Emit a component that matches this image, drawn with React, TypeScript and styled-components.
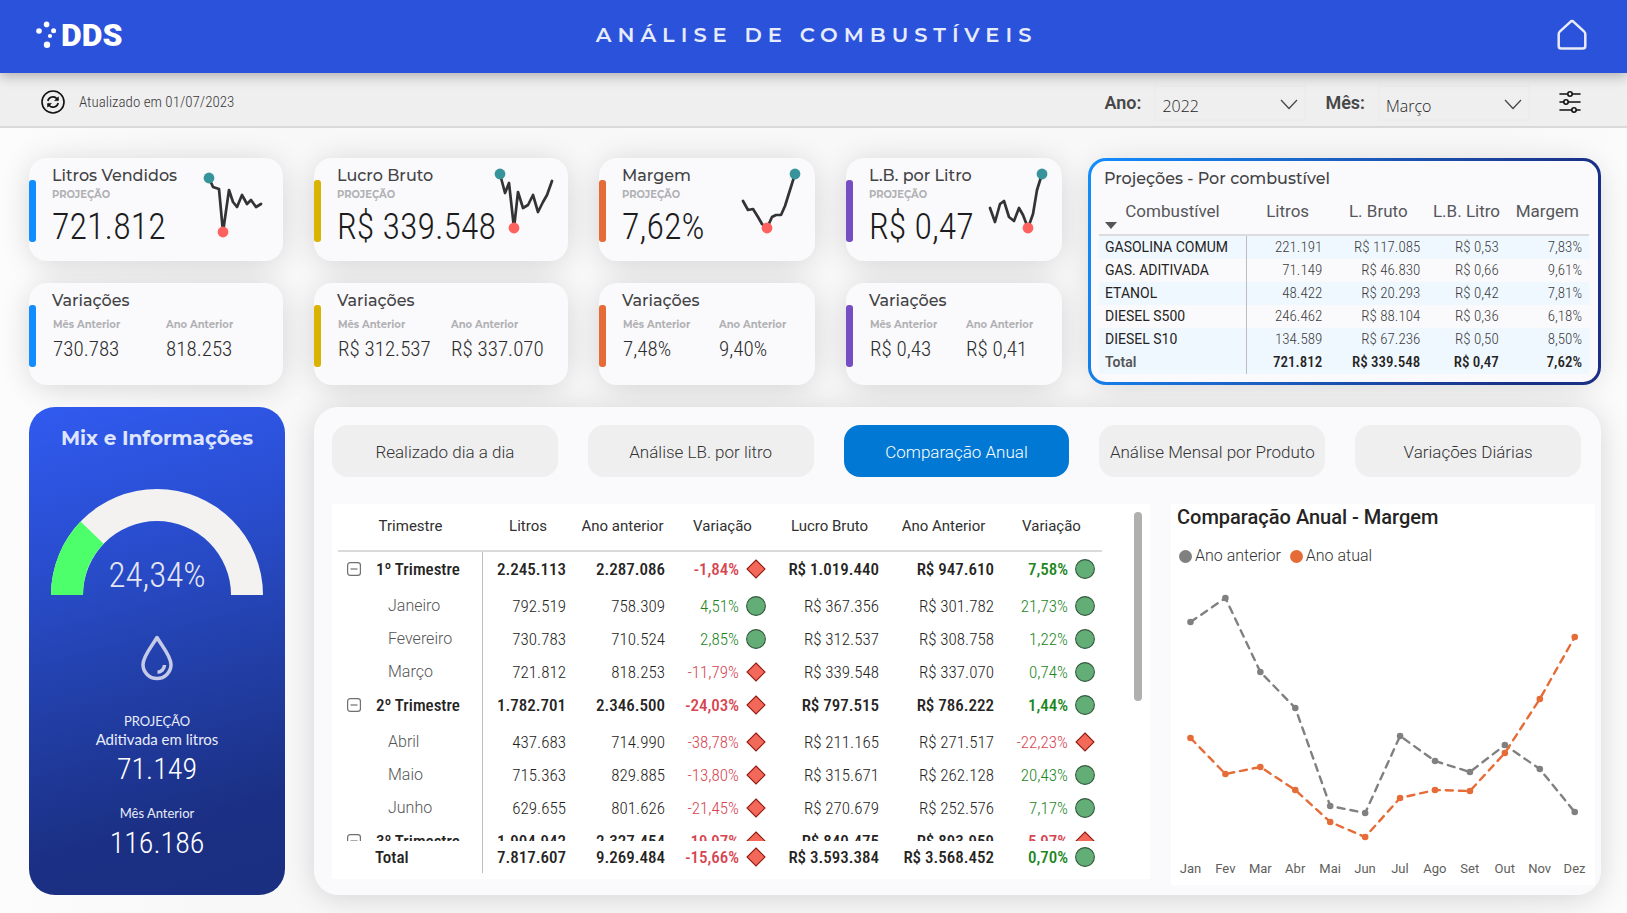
import React from "react";
import styled, { createGlobalStyle } from "styled-components";

const din = '"Roboto Condensed", Roboto, "Liberation Sans", sans-serif';
const dinWide = 'Roboto, "Liberation Sans", sans-serif';
const geo = 'Montserrat, "Open Sans", sans-serif';
const humanist = 'Lato, "Open Sans", sans-serif';

const GlobalStyle = createGlobalStyle`
  *, *::before, *::after { box-sizing: border-box; }
  body { margin: 0; background: #fafafb; color: #252423; font-family: ${din}; }
  h1, h2, h3, p, dl, dd { margin: 0; }
  button, select { font: inherit; color: inherit; }
`;

const Page = styled.div`
  min-height: 100vh;
  isolation: isolate;
  background: linear-gradient(90deg, #fcfcfc, #f8f8f9 12%, #f8f8f9 92%, #fbfbfc);
`;

/* ---------- top bars ---------- */

const Header = styled.header`
  position: relative;
  z-index: 1;
  display: grid;
  grid-template-columns: 1fr auto 1fr;
  align-items: center;
  height: 73px;
  padding: 0 40px 3px 36px;
  background: #2b52da;
  box-shadow: 0 3px 12px rgba(0, 0, 0, 0.28);
`;

const Logo = styled.a`
  display: flex;
  align-items: center;
  gap: 4px;
  color: #fff;
  font: 900 32px/34px ${dinWide};
  text-decoration: none;
`;

const Title = styled.h1`
  padding-left: 10px;
  color: #e6ebfd;
  font: 600 21px/26px ${geo};
  letter-spacing: 6px;
`;

const IconButton = styled.button`
  display: flex;
  justify-self: end;
  padding: 0;
  border: 0;
  background: none;
  cursor: pointer;
`;

const FilterBar = styled.section`
  display: flex;
  align-items: center;
  height: 55px;
  padding: 4px 46px 0 41px;
  border-bottom: 2px solid #d9d9da;
  background: #efeff0;
`;

const Updated = styled.p`
  flex: 1;
  display: flex;
  align-items: center;
  gap: 14px;
  color: #3a3a3a;
  font: 300 15px/20px ${din};
`;

const FilterLabel = styled.label`
  display: flex;
  align-items: center;
  gap: 13px;
  margin-right: 19px;
  padding-top: 3px;
  color: #474747;
  font: 600 18px/34px ${dinWide};
`;

const SelectBox = styled.span`
  position: relative;
  display: flex;
  width: 152px;
  border: 2px solid #ececed;

  svg {
    position: absolute;
    right: 6px;
    top: 12px;
    pointer-events: none;
  }
`;

const Select = styled.select`
  appearance: none;
  width: 100%;
  height: 32px;
  padding: 6px 6px 0;
  border: 0;
  background: transparent;
  color: #252423;
  font: 300 16px/24px "Open Sans", "Noto Sans", sans-serif;
`;

/* ---------- cards ---------- */

const Content = styled.main`
  display: grid;
  gap: 22px;
  padding: 30px 26px 18px 29px;
`;

const TopRow = styled.div`
  display: grid;
  grid-template-columns: minmax(0, 1033fr) minmax(0, 513fr);
  gap: 26px;
`;

const CardGrid = styled.div`
  display: grid;
  grid-template-columns: 254fr 254fr 216fr 216fr;
  grid-template-rows: 103px 102px;
  gap: 22px 31px;
`;

const Raised = styled.div`
  position: relative;

  &::before {
    content: "";
    position: absolute;
    inset: 0;
    z-index: -1;
    border-radius: 24px;
    box-shadow: 0 3px 30px rgba(0, 0, 0, 0.15);
  }
`;

const Card = styled(Raised)`
  display: flex;
  align-items: flex-start;
  border-radius: 18px;
  background: #fafafc;
`;

const Accent = styled.span<{ $color: string }>`
  flex: none;
  width: 7px;
  height: 62px;
  margin: 22px 16px 0 0;
  border-radius: 3px;
  background: ${p => p.$color};
`;

const CardBody = styled.div`
  flex: 1;
  min-width: 0;
  padding-top: 8px;
`;

const CardTitle = styled.h2`
  color: #434345;
  font: 500 16px/20px ${geo};
  white-space: nowrap;
`;

const Caption = styled.p`
  color: #b1b1b4;
  font: 700 10px/18px ${geo};
`;

const BigNumber = styled.p`
  color: #1c1c1c;
  font: 300 36px/46px ${din};
  white-space: nowrap;
`;

const Spark = styled.svg`
  flex: none;
  margin: 0 14px 0 -80px;
`;

const Variations = styled.dl<{ $wide: boolean }>`
  display: grid;
  grid-template-columns: ${p => (p.$wide ? 113 : 96)}px 1fr;
  margin-top: 7px;
  padding-left: 1px;

  dt {
    color: #b1b1b4;
    font: 700 10px/14px ${geo};
    white-space: nowrap;
  }
  dd {
    margin-top: 4px;
    color: #2c2c2c;
    font: 300 21px/26px ${din};
    white-space: nowrap;
  }
`;

/* ---------- fuel projections ---------- */

const Projections = styled(Raised)`
  padding: 8px 9px 6px 8px;
  border: 3px solid transparent;
  border-radius: 18px;
  background:
    linear-gradient(#fafafc, #fafafc) padding-box,
    linear-gradient(110deg, #118dff, #1b62c4 40%, #1a2f86 85%) border-box;
`;

const ProjectionsTitle = styled.h2`
  padding-left: 5px;
  color: #434345;
  font: 500 16px/20px ${geo};
`;

const FuelTable = styled.table`
  width: 100%;
  margin-top: 3px;
  border-collapse: collapse;
  table-layout: fixed;
  font: 300 15px/23px ${din};

  thead th {
    height: 43px;
    padding: 0 0 4px;
    border-bottom: 2px solid #dcdcdc;
    color: #56565a;
    font: 400 17px/20px ${dinWide};
    white-space: nowrap;
  }
  thead th:nth-child(2) { width: 17%; }
  thead th:nth-child(3) { width: 20%; }
  thead th:nth-child(4) { width: 16%; }
  tbody th, tfoot th {
    padding: 0 0 0 6px;
    border-right: 1px solid #bdbdbd;
    font-family: ${dinWide};
    font-size: 14px;
    font-weight: 400;
    text-align: left;
    white-space: nowrap;
  }
  td {
    padding: 0 7px 0 0;
    color: #3c3c3c;
    text-align: right;
    white-space: nowrap;
  }
  tbody tr:nth-child(odd), tfoot tr { background: #f0f8ff; }
  tfoot th { color: #555; font-weight: 600; }
  tfoot td { color: #252423; font-weight: 500; }
`;

const FuelName = styled.th`
  position: relative;
  width: 30%;

  svg {
    position: absolute;
    left: 6px;
    bottom: 5px;
  }
`;

/* ---------- mix panel ---------- */

const BottomRow = styled.div`
  display: grid;
  grid-template-columns: 256px minmax(0, 1fr);
  gap: 29px;
`;

const Mix = styled.aside`
  display: flex;
  flex-direction: column;
  align-items: center;
  border-radius: 26px;
  background: linear-gradient(165deg, #315bf0, #2a4fd4 25%, #2341ac 52%, #1b3084 82%, #1a2f80);
  color: #e9ecfa;
  text-align: center;
`;

const MixTitle = styled.h2`
  margin-top: 18px;
  color: #dfe5fc;
  font: 700 20px/26px ${geo};
`;

const GaugeBox = styled.div`
  display: grid;
  justify-items: center;
  margin: 37px 0 40px;

  > * { grid-area: 1 / 1; }
`;

const GaugeValue = styled.span`
  align-self: end;
  color: #e3e6f2;
  font: 300 35px/38px ${din};
`;

const Drop = styled.svg`
  margin-bottom: 31px;
`;

const MixLabel = styled.p<{ $large?: boolean }>`
  font: 400 ${p => (p.$large ? 15 : 13)}px/18px ${humanist};
`;

const MixValue = styled.p`
  margin: 4px 0 18px;
  color: #fff;
  font: 300 30px/34px ${din};
`;

/* ---------- main panel ---------- */

const Panel = styled(Raised)`
  padding: 18px 6px 10px 18px;
  border-radius: 26px;
  background: #fafafc;
`;

const Tabs = styled.nav`
  display: grid;
  grid-template-columns: repeat(5, 1fr);
  gap: 30px;
  margin: 0 14px 27px 0;
`;

const Tab = styled.button<{ $active: boolean }>`
  height: 52px;
  padding: 2px 0 0;
  border: 0;
  border-radius: 16px;
  background: ${p => (p.$active ? "#0078d4" : "#efeff0")};
  color: ${p => (p.$active ? "#fff" : "#333")};
  font: 300 17px/24px ${dinWide};
  white-space: nowrap;
  cursor: pointer;
`;

const PanelBody = styled.div`
  display: grid;
  grid-template-columns: minmax(0, 818fr) minmax(0, 424fr);
  gap: 21px;
  align-items: start;
`;

const TableBox = styled.div`
  display: flex;
  justify-content: space-between;
  height: 375px;
  padding: 0 8px 0 6px;
  background: #fff;
`;

const ScrollThumb = styled.span`
  width: 8px;
  height: 189px;
  margin-top: 8px;
  border-radius: 4px;
  background: #b0b0ae;
`;

const Matrix = styled.table`
  display: flex;
  flex-direction: column;
  flex: 0 1 764px;
  font: 300 17px/24px ${din};
`;

const MatrixHead = styled.thead`
  display: block;
  border-bottom: 2px solid #dadada;

  th {
    color: #303030;
    font: 400 15px/42px ${dinWide};
    text-align: center;
    white-space: nowrap;
  }
`;

const MatrixBody = styled.tbody`
  display: block;
  height: 289px;
  overflow: hidden;
`;

const MatrixFoot = styled.tfoot`
  display: block;
`;

const MatrixRow = styled.tr<{ $kind?: "group" | "month" | "total" }>`
  display: grid;
  grid-template-columns: 145fr 90fr 99fr 101fr 113fr 115fr 101fr;
  height: ${p => (p.$kind === "group" ? 37 : p.$kind === "month" ? 33 : p.$kind === "total" ? 32 : 46)}px;
  font-weight: ${p => (p.$kind === "month" ? 300 : 500)};
`;

const RowName = styled.th<{ $kind: "group" | "month" | "total" }>`
  display: flex;
  align-items: center;
  gap: 15px;
  padding: 0 0 ${p => (p.$kind === "group" ? 3 : 0)}px ${p => (p.$kind === "group" ? 9 : p.$kind === "month" ? 50 : 37)}px;
  border-right: 1px solid #bdbdbd;
  color: ${p => (p.$kind === "month" ? "#555" : "#252423")};
  font-family: ${p => (p.$kind === "month" ? dinWide : din)};
  font-size: ${p => (p.$kind === "month" ? 16 : 17)}px;
  font-weight: ${p => (p.$kind === "month" ? 300 : 500)};
  white-space: nowrap;
`;

const Cell = styled.td<{ $group: boolean; $tone?: "up" | "down" }>`
  display: flex;
  align-items: center;
  justify-content: flex-end;
  gap: 7px;
  padding: 0 7px ${p => (p.$group ? 3 : 0)}px 0;
  color: ${p => (p.$tone === "up" ? "#1a861c" : p.$tone === "down" ? "#d64550" : "#252423")};
  white-space: nowrap;
`;

const ToggleButton = styled.button`
  display: flex;
  padding: 0;
  border: 0;
  background: none;
`;

const ChartBox = styled.section`
  height: 381px;
  padding: 0 3px 0 2px;
  background: #fff;
`;

const ChartTitle = styled.h2`
  padding-left: 4px;
  color: #252423;
  font: 500 20px/26px ${dinWide};
`;

const Legend = styled.div`
  display: flex;
  gap: 9px;
  padding: 16px 0 0 6px;
  color: #333;
  font: 300 16px/20px ${dinWide};
`;

const LegendItem = styled.span<{ $color: string }>`
  display: flex;
  align-items: center;
  gap: 3px;

  &::before {
    content: "";
    width: 13px;
    height: 13px;
    border-radius: 50%;
    background: ${p => p.$color};
  }
`;

const Plot = styled.svg`
  display: block;
  width: 100%;
  height: 294px;
`;

const Months = styled.div`
  display: grid;
  grid-template-columns: repeat(12, 1fr);
  color: #605e5c;
  font: 400 13px/18px ${dinWide};
  text-align: center;
`;

/* ---------- data ---------- */

type Point = [number, number];

type Metric = {
  title: string;
  value: string;
  color: string;
  wide: boolean;
  month: string;
  year: string;
  line: Point[];
  high: Point;
  low: Point;
};

const metrics: Metric[] = [
  {
    title: "Litros Vendidos", value: "721.812", color: "#118dff", wide: true, month: "730.783", year: "818.253",
    line: [[6, 20], [10, 29], [16, 31], [20, 74], [26, 32], [30, 44], [34, 49], [39, 37], [44, 46], [48, 42], [53, 49], [58, 46]],
    high: [6, 20], low: [20, 74],
  },
  {
    title: "Lucro Bruto", value: "R$ 339.548", color: "#d9b300", wide: true, month: "R$ 312.537", year: "R$ 337.070",
    line: [[12, 16], [17, 35], [21, 25], [26, 70], [30, 34], [35, 50], [40, 47], [45, 37], [50, 54], [55, 44], [59, 37], [64, 23]],
    high: [12, 16], low: [26, 70],
  },
  {
    title: "Margem", value: "7,62%", color: "#e66c37", wide: false, month: "7,48%", year: "9,40%",
    line: [[8, 43], [13, 52], [18, 51], [23, 59], [27, 66], [32, 70], [37, 59], [41, 57], [46, 57], [50, 48], [60, 16]],
    high: [60, 16], low: [32, 70],
  },
  {
    title: "L.B. por Litro", value: "R$ 0,47", color: "#744ec2", wide: false, month: "R$ 0,43", year: "R$ 0,41",
    line: [[8, 50], [13, 64], [18, 46], [22, 43], [27, 59], [32, 63], [37, 50], [41, 57], [46, 70], [51, 56], [55, 32], [60, 16]],
    high: [60, 16], low: [46, 70],
  },
];

const fuels = [
  ["GASOLINA COMUM", "221.191", "R$ 117.085", "R$ 0,53", "7,83%"],
  ["GAS. ADITIVADA", "71.149", "R$ 46.830", "R$ 0,66", "9,61%"],
  ["ETANOL", "48.422", "R$ 20.293", "R$ 0,42", "7,81%"],
  ["DIESEL S500", "246.462", "R$ 88.104", "R$ 0,36", "6,18%"],
  ["DIESEL S10", "134.589", "R$ 67.236", "R$ 0,50", "8,50%"],
];

const tabs = ["Realizado dia a dia", "Análise LB. por litro", "Comparação Anual", "Análise Mensal por Produto", "Variações Diárias"];

type Row = { kind: "group" | "month" | "total"; name: string; cells: string[] };

const rows: Row[] = [
  { kind: "group", name: "1º Trimestre", cells: ["2.245.113", "2.287.086", "-1,84%", "R$ 1.019.440", "R$ 947.610", "7,58%"] },
  { kind: "month", name: "Janeiro", cells: ["792.519", "758.309", "4,51%", "R$ 367.356", "R$ 301.782", "21,73%"] },
  { kind: "month", name: "Fevereiro", cells: ["730.783", "710.524", "2,85%", "R$ 312.537", "R$ 308.758", "1,22%"] },
  { kind: "month", name: "Março", cells: ["721.812", "818.253", "-11,79%", "R$ 339.548", "R$ 337.070", "0,74%"] },
  { kind: "group", name: "2º Trimestre", cells: ["1.782.701", "2.346.500", "-24,03%", "R$ 797.515", "R$ 786.222", "1,44%"] },
  { kind: "month", name: "Abril", cells: ["437.683", "714.990", "-38,78%", "R$ 211.165", "R$ 271.517", "-22,23%"] },
  { kind: "month", name: "Maio", cells: ["715.363", "829.885", "-13,80%", "R$ 315.671", "R$ 262.128", "20,43%"] },
  { kind: "month", name: "Junho", cells: ["629.655", "801.626", "-21,45%", "R$ 270.679", "R$ 252.576", "7,17%"] },
  { kind: "group", name: "3º Trimestre", cells: ["1.904.942", "2.327.454", "-19,97%", "R$ 840.475", "R$ 893.959", "-5,97%"] },
];

const total: Row = {
  kind: "total", name: "Total",
  cells: ["7.817.607", "9.269.484", "-15,66%", "R$ 3.593.384", "R$ 3.568.452", "0,70%"],
};

const months = ["Jan", "Fev", "Mar", "Abr", "Mai", "Jun", "Jul", "Ago", "Set", "Out", "Nov", "Dez"];
const previous = [56, 32, 106, 142, 240, 247, 170, 195, 206, 179, 203, 246];
const current = [172, 208, 201, 224, 256, 271, 232, 224, 225, 187, 133, 71];

/* ---------- parts ---------- */

const Sparkline = ({ line, high, low }: Pick<Metric, "line" | "high" | "low">) => (
  <Spark width="66" height="90" viewBox="0 0 66 90" aria-hidden="true">
    <polyline points={line.join(" ")} fill="none" stroke="#333" strokeWidth="2.7" strokeLinejoin="round" strokeLinecap="round" />
    <circle cx={high[0]} cy={high[1]} r="5.4" fill="#37949a" />
    <circle cx={low[0]} cy={low[1]} r="5.4" fill="#fd625e" />
  </Spark>
);

const Chevron = () => (
  <svg width="18" height="11" viewBox="0 0 18 11" fill="none" stroke="#444" strokeWidth="1.2" aria-hidden="true">
    <path d="M1 1l8 8.5L17 1" />
  </svg>
);

const Mark = ({ tone }: { tone: "up" | "down" }) => (
  <svg width="20" height="20" viewBox="0 0 20 20" aria-hidden="true">
    {tone === "up"
      ? <circle cx="10" cy="10" r="9.4" fill="#62ae76" stroke="#35593f" strokeWidth="1.1" />
      : <path d="M10 1l9 9-9 9-9-9z" fill="#f2695a" stroke="#931a10" strokeWidth="1.1" />}
  </svg>
);

const Minus = () => (
  <svg width="14" height="14" viewBox="0 0 14 14" fill="none" stroke="#707070" strokeWidth="1.2" aria-hidden="true">
    <rect x=".6" y=".6" width="12.8" height="12.8" rx="2.6" />
    <path d="M3.5 7h7" />
  </svg>
);

const DataRow = ({ row }: { row: Row }) => (
  <MatrixRow $kind={row.kind}>
    <RowName $kind={row.kind} scope="row">
      {row.kind === "group" && <ToggleButton aria-label="Recolher"><Minus /></ToggleButton>}
      {row.name}
    </RowName>
    {row.cells.map((cell, i) => {
      const tone = cell.endsWith("%") ? (cell.startsWith("-") ? "down" : "up") : undefined;
      return (
        <Cell key={i} $group={row.kind === "group"} $tone={tone}>
          {cell}
          {tone && <Mark tone={tone} />}
        </Cell>
      );
    })}
  </MatrixRow>
);

const Series = ({ values, color }: { values: number[]; color: string }) => {
  const points = values.map((y, i): Point => [17.5 + i * 34.93, y]);
  return (
    <g>
      <polyline points={points.join(" ")} fill="none" stroke={color} strokeWidth="2.4" strokeDasharray="7 6" strokeLinecap="round" />
      {points.map(([x, y]) => <circle key={x} cx={x} cy={y} r="3.3" fill={color} />)}
    </g>
  );
};

export default function App() {
  return (
    <>
      <GlobalStyle />
      <Page>
        <Header>
          <Logo href="#" aria-label="DDS">
            <svg width="21" height="28" viewBox="0 0 21 28" fill="#fff" aria-hidden="true">
              <circle cx="3" cy="10" r="2.8" />
              <circle cx="10.6" cy="3.4" r="2.8" />
              <circle cx="17.6" cy="9.8" r="2.5" />
              <circle cx="14" cy="15" r="2.1" />
              <circle cx="11" cy="23.8" r="3.2" />
            </svg>
            DDS
          </Logo>
          <Title>ANÁLISE DE COMBUSTÍVEIS</Title>
          <IconButton aria-label="Início">
            <svg width="30" height="32" viewBox="0 0 30 32" fill="none" stroke="#e9ecf8" strokeWidth="2.5" strokeLinejoin="round" aria-hidden="true">
              <path d="M13.4 2.8a2.2 2.2 0 0 1 3.2 0L27 12.4a3.6 3.6 0 0 1 1.3 2.8V27a2.6 2.6 0 0 1-2.6 2.6H4.3A2.6 2.6 0 0 1 1.7 27V15.2a3.6 3.6 0 0 1 1.3-2.8z" />
            </svg>
          </IconButton>
        </Header>

        <FilterBar>
          <Updated>
            <svg width="24" height="24" viewBox="0 0 24 24" fill="none" stroke="#111" strokeWidth="1.6" aria-hidden="true">
              <circle cx="12" cy="12" r="11" />
              <path d="M6.8 11A5.3 5.3 0 0 1 16 8.8l1 1.2M17.2 13A5.3 5.3 0 0 1 8 15.2l-1-1.2" />
              <path d="M17.4 6.8v3.8h-3.8zM6.6 17.2v-3.8h3.8z" fill="#111" strokeWidth="0.6" />
            </svg>
            Atualizado em 01/07/2023
          </Updated>
          <FilterLabel>
            Ano:
            <SelectBox>
              <Select defaultValue="2022"><option>2022</option></Select>
              <Chevron />
            </SelectBox>
          </FilterLabel>
          <FilterLabel>
            Mês:
            <SelectBox>
              <Select defaultValue="Março"><option>Março</option></Select>
              <Chevron />
            </SelectBox>
          </FilterLabel>
          <IconButton aria-label="Filtros">
            <svg width="32" height="22" viewBox="-10 0 32 22" fill="none" stroke="#111" strokeWidth="1.6" strokeLinecap="round" aria-hidden="true">
              <path d="M1 3h7.5M13.5 3H21M1 11h3.5M9.5 11H21M1 19h11.5M17.5 19H21" />
              <circle cx="11" cy="3" r="2.2" />
              <circle cx="7" cy="11" r="2.2" />
              <circle cx="15" cy="19" r="2.2" />
            </svg>
          </IconButton>
        </FilterBar>

        <Content>
          <TopRow>
            <CardGrid>
              {metrics.map(m => (
                <Card key={m.title}>
                  <Accent $color={m.color} />
                  <CardBody>
                    <CardTitle>{m.title}</CardTitle>
                    <Caption>PROJEÇÃO</Caption>
                    <BigNumber>{m.value}</BigNumber>
                  </CardBody>
                  <Sparkline line={m.line} high={m.high} low={m.low} />
                </Card>
              ))}
              {metrics.map(m => (
                <Card key={m.title + m.month}>
                  <Accent $color={m.color} />
                  <CardBody>
                    <CardTitle>Variações</CardTitle>
                    <Variations $wide={m.wide}>
                      <div><dt>Mês Anterior</dt><dd>{m.month}</dd></div>
                      <div><dt>Ano Anterior</dt><dd>{m.year}</dd></div>
                    </Variations>
                  </CardBody>
                </Card>
              ))}
            </CardGrid>

            <Projections>
              <ProjectionsTitle>Projeções - Por combustível</ProjectionsTitle>
              <FuelTable>
                <thead>
                  <tr>
                    <FuelName scope="col">
                      Combustível
                      <svg width="12" height="7" viewBox="0 0 12 7" fill="#555" aria-hidden="true"><path d="M0 0h12L6 7z" /></svg>
                    </FuelName>
                    <th scope="col">Litros</th>
                    <th scope="col">L. Bruto</th>
                    <th scope="col">L.B. Litro</th>
                    <th scope="col">Margem</th>
                  </tr>
                </thead>
                <tbody>
                  {fuels.map(([name, ...values]) => (
                    <tr key={name}>
                      <th scope="row">{name}</th>
                      {values.map(v => <td key={v}>{v}</td>)}
                    </tr>
                  ))}
                </tbody>
                <tfoot>
                  <tr>
                    <th scope="row">Total</th>
                    <td>721.812</td><td>R$ 339.548</td><td>R$ 0,47</td><td>7,62%</td>
                  </tr>
                </tfoot>
              </FuelTable>
            </Projections>
          </TopRow>

          <BottomRow>
            <Mix>
              <MixTitle>Mix e Informações</MixTitle>
              <GaugeBox>
                <svg width="212" height="107" viewBox="0 0 212 107" aria-hidden="true">
                  <path d="M0 107A106 106 0 0 1 212 107H180A74 74 0 0 0 32 107z" fill="#f3f2f1" />
                  <path d="M0 107A106 106 0 0 1 29.5 33.6L52.6 55.8A74 74 0 0 0 32 107z" fill="#4dff6a" />
                </svg>
                <GaugeValue>24,34%</GaugeValue>
              </GaugeBox>
              <Drop width="34" height="46" viewBox="0 0 34 46" fill="none" stroke="#c5cbe6" strokeWidth="3.5" strokeLinejoin="round" aria-hidden="true">
                <path d="M17 2.5C12 11 3 21 3 29.5a14 14 0 0 0 28 0C31 21 22 11 17 2.5z" />
                <path d="M24.5 30a7.5 7.5 0 0 1-7 7.2" />
              </Drop>
              <MixLabel>PROJEÇÃO</MixLabel>
              <MixLabel $large>Aditivada em litros</MixLabel>
              <MixValue>71.149</MixValue>
              <MixLabel>Mês Anterior</MixLabel>
              <MixValue>116.186</MixValue>
            </Mix>

            <Panel>
              <Tabs>
                {tabs.map(t => <Tab key={t} $active={t === "Comparação Anual"}>{t}</Tab>)}
              </Tabs>
              <PanelBody>
                <TableBox>
                  <Matrix>
                    <MatrixHead>
                      <MatrixRow>
                        {["Trimestre", "Litros", "Ano anterior", "Variação", "Lucro Bruto", "Ano Anterior", "Variação"].map((h, i) => (
                          <th key={i} scope="col">{h}</th>
                        ))}
                      </MatrixRow>
                    </MatrixHead>
                    <MatrixBody>
                      {rows.map(r => <DataRow key={r.name} row={r} />)}
                    </MatrixBody>
                    <MatrixFoot>
                      <DataRow row={total} />
                    </MatrixFoot>
                  </Matrix>
                  <ScrollThumb />
                </TableBox>

                <ChartBox>
                  <ChartTitle>Comparação Anual - Margem</ChartTitle>
                  <Legend>
                    <LegendItem $color="#808080">Ano anterior</LegendItem>
                    <LegendItem $color="#e66c37">Ano atual</LegendItem>
                  </Legend>
                  <Plot viewBox="0 0 419 294" role="img" aria-label="Comparação Anual - Margem">
                    <Series values={previous} color="#808080" />
                    <Series values={current} color="#e66c37" />
                  </Plot>
                  <Months>{months.map(m => <span key={m}>{m}</span>)}</Months>
                </ChartBox>
              </PanelBody>
            </Panel>
          </BottomRow>
        </Content>
      </Page>
    </>
  );
}
